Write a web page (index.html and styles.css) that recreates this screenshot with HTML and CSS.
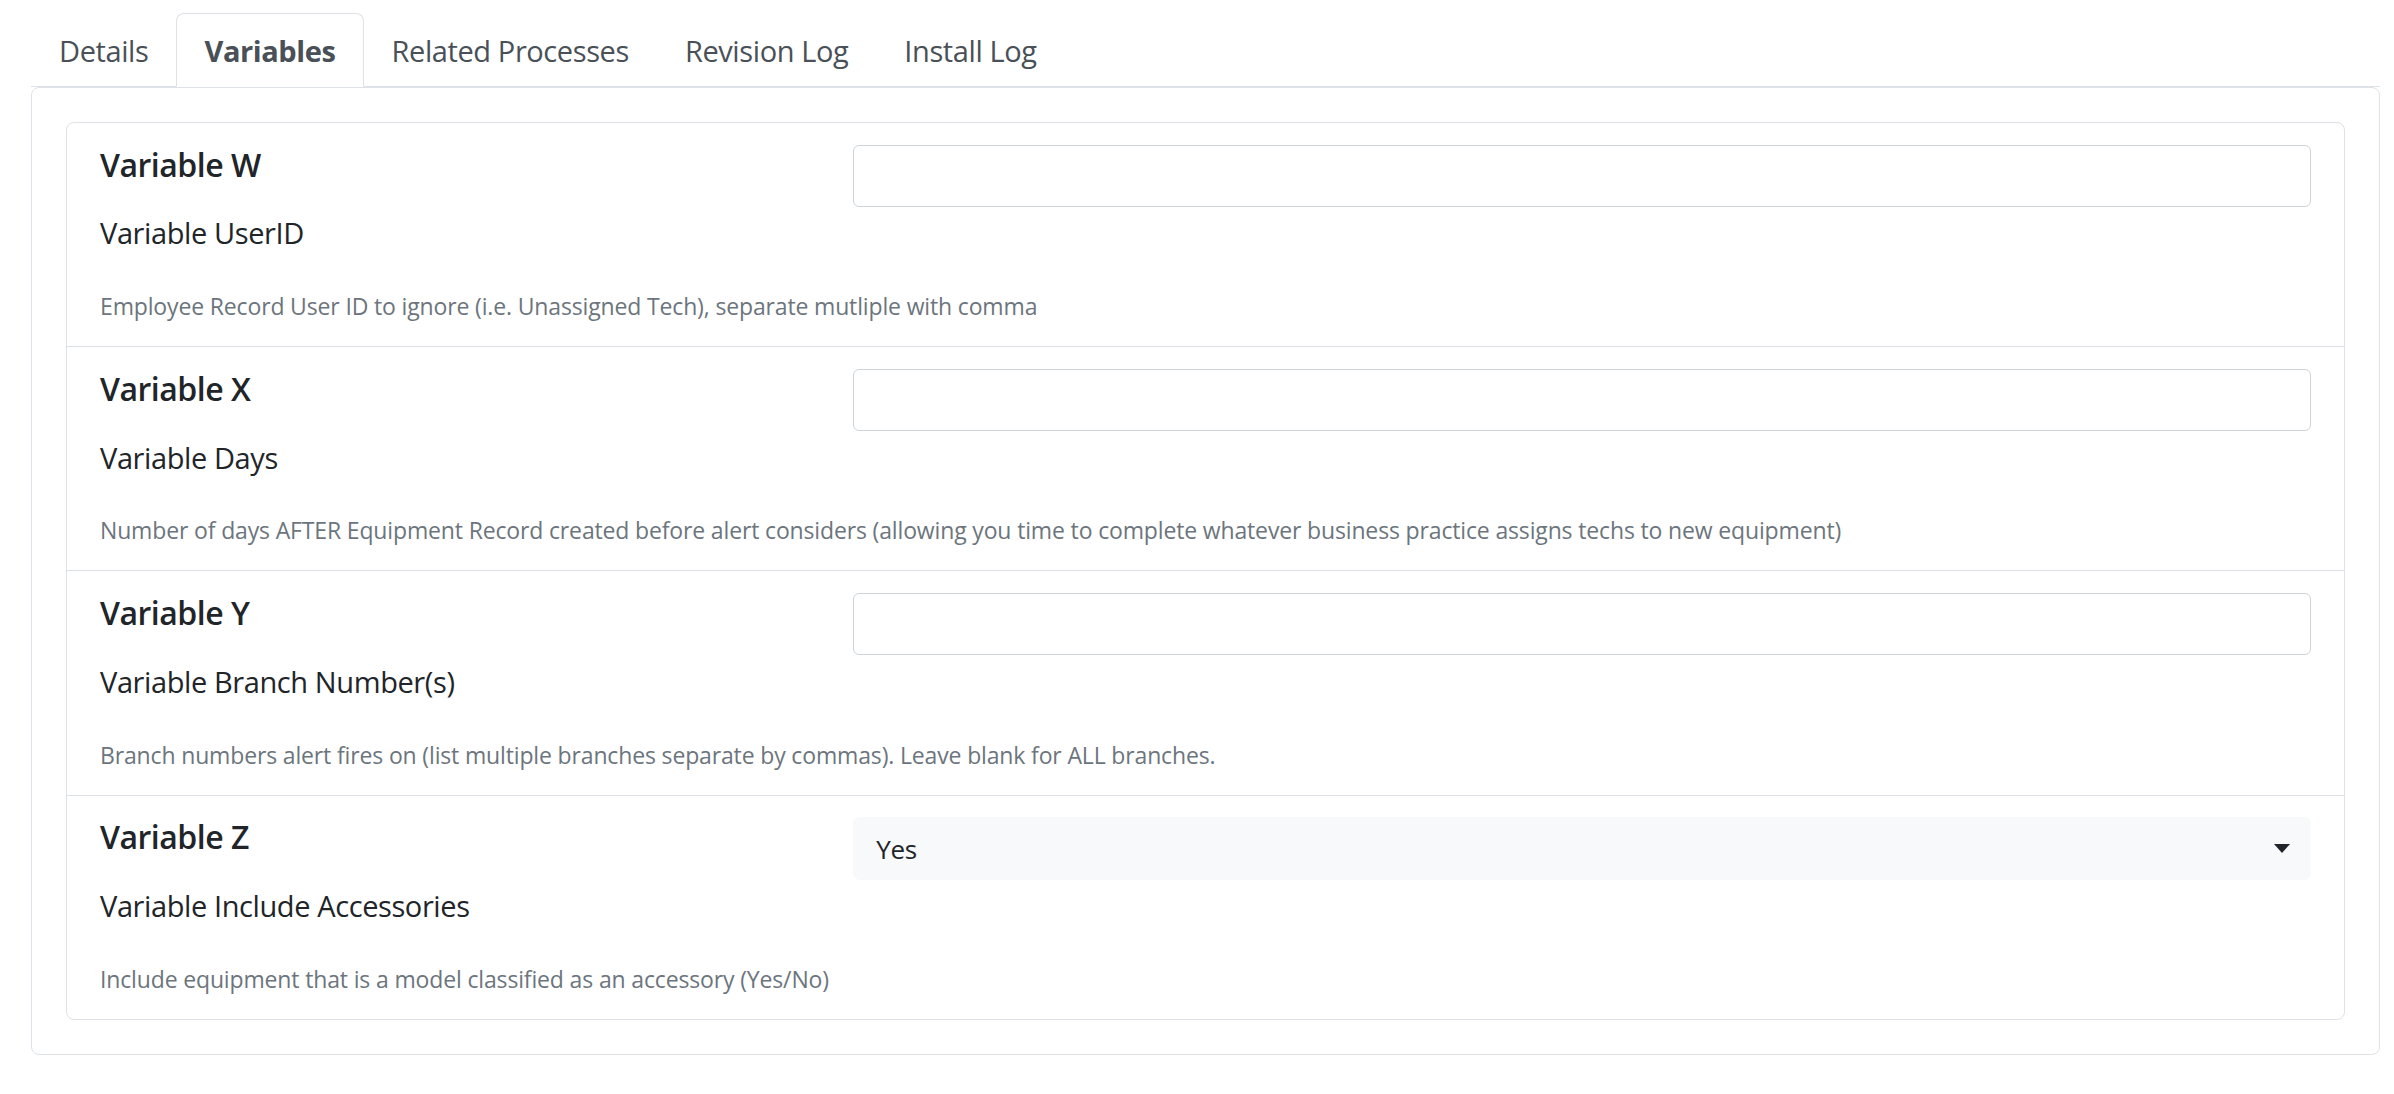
FILE: index.html
```html
<!DOCTYPE html>
<html lang="en">
<head>
<meta charset="utf-8">
<title>Variables</title>
<link rel="stylesheet" href="styles.css">
</head>
<body>
<div class="page">
  <ul class="tabs">
    <li><a class="tab">Details</a></li>
    <li><a class="tab active">Variables</a></li>
    <li><a class="tab">Related Processes</a></li>
    <li><a class="tab">Revision Log</a></li>
    <li><a class="tab">Install Log</a></li>
  </ul>
  <div class="card">
    <div class="list">
      <div class="item">
        <div class="info">
          <h5 class="var-title">Variable W</h5>
          <div class="var-label">Variable UserID</div>
          <div class="var-help">Employee Record User ID to ignore (i.e. Unassigned Tech), separate mutliple with comma</div>
        </div>
        <div class="field"><input class="text-input" type="text"></div>
      </div>
      <div class="item">
        <div class="info">
          <h5 class="var-title">Variable X</h5>
          <div class="var-label">Variable Days</div>
          <div class="var-help">Number of days AFTER Equipment Record created before alert considers (allowing you time to complete whatever business practice assigns techs to new equipment)</div>
        </div>
        <div class="field"><input class="text-input" type="text"></div>
      </div>
      <div class="item">
        <div class="info">
          <h5 class="var-title">Variable Y</h5>
          <div class="var-label">Variable Branch Number(s)</div>
          <div class="var-help">Branch numbers alert fires on (list multiple branches separate by commas). Leave blank for ALL branches.</div>
        </div>
        <div class="field"><input class="text-input" type="text"></div>
      </div>
      <div class="item">
        <div class="info">
          <h5 class="var-title">Variable Z</h5>
          <div class="var-label">Variable Include Accessories</div>
          <div class="var-help">Include equipment that is a model classified as an accessory (Yes/No)</div>
        </div>
        <div class="field">
          <div class="select">
            <span class="select-value">Yes</span>
            <svg class="select-arrow" width="16" height="9" viewBox="0 0 16 9"><path d="M0 0 H16 L8 9 Z" fill="#212529"/></svg>
          </div>
        </div>
      </div>
    </div>
  </div>
</div>
</body>
</html>
```

FILE: styles.css
```css
* { box-sizing: border-box; }
html, body { margin: 0; padding: 0; background: #fff; }
body {
  font-family: "Open Sans", "Noto Sans", sans-serif;
  color: #212529;
}
.page {
  padding: 13px 14px 0 31px;
}
.tabs {
  display: flex;
  list-style: none;
  margin: 0;
  padding: 0;
  border-bottom: 1px solid #dee2e6;
}
.tabs li { margin-bottom: -1px; }
.tab {
  display: block;
  padding: 13.5px 27px;
  font-size: 29px;
  line-height: 45px;
  letter-spacing: -0.4px;
  color: #495057;
  border: 1px solid transparent;
  border-radius: 8px 8px 0 0;
}
.tab.active {
  font-weight: 700;
  background: #fff;
  border-color: #dee2e6 #dee2e6 #fff;
}
.card {
  border: 1px solid #dee2e6;
  border-radius: 8px;
  padding: 34px;
}
.list {
  border: 1px solid #dee2e6;
  border-radius: 8px;
}
.item {
  display: grid;
  grid-template-columns: minmax(0, 1fr) minmax(0, 2fr);
  column-gap: 24.5px;
  padding: 21.5px 33px 22px;
}
.item + .item { border-top: 1px solid #dee2e6; }
.info { min-width: 0; }
.var-title {
  margin: 0 0 26.4px;
  font-size: 32px;
  line-height: 39.6px;
  font-weight: 600;
  letter-spacing: -0.5px;
  color: #212529;
}
.var-label {
  margin-bottom: 32.7px;
  font-size: 29px;
  line-height: 45px;
  letter-spacing: -0.4px;
}
.var-help {
  font-size: 23px;
  line-height: 36px;
  letter-spacing: -0.15px;
  color: #6c757d;
  white-space: nowrap;
}
.text-input {
  display: block;
  width: 100%;
  height: 62px;
  margin: 0;
  border: 1px solid #ced4da;
  border-radius: 6px;
  background: #fff;
  font: inherit;
}
.select {
  display: flex;
  align-items: center;
  justify-content: space-between;
  height: 63px;
  padding: 0 21px 0 23px;
  background: #f8f9fa;
  border-radius: 7px;
}
.select-value {
  font-size: 26px;
  letter-spacing: -0.3px;
  color: #212529;
}
.select-arrow { display: block; }
```
